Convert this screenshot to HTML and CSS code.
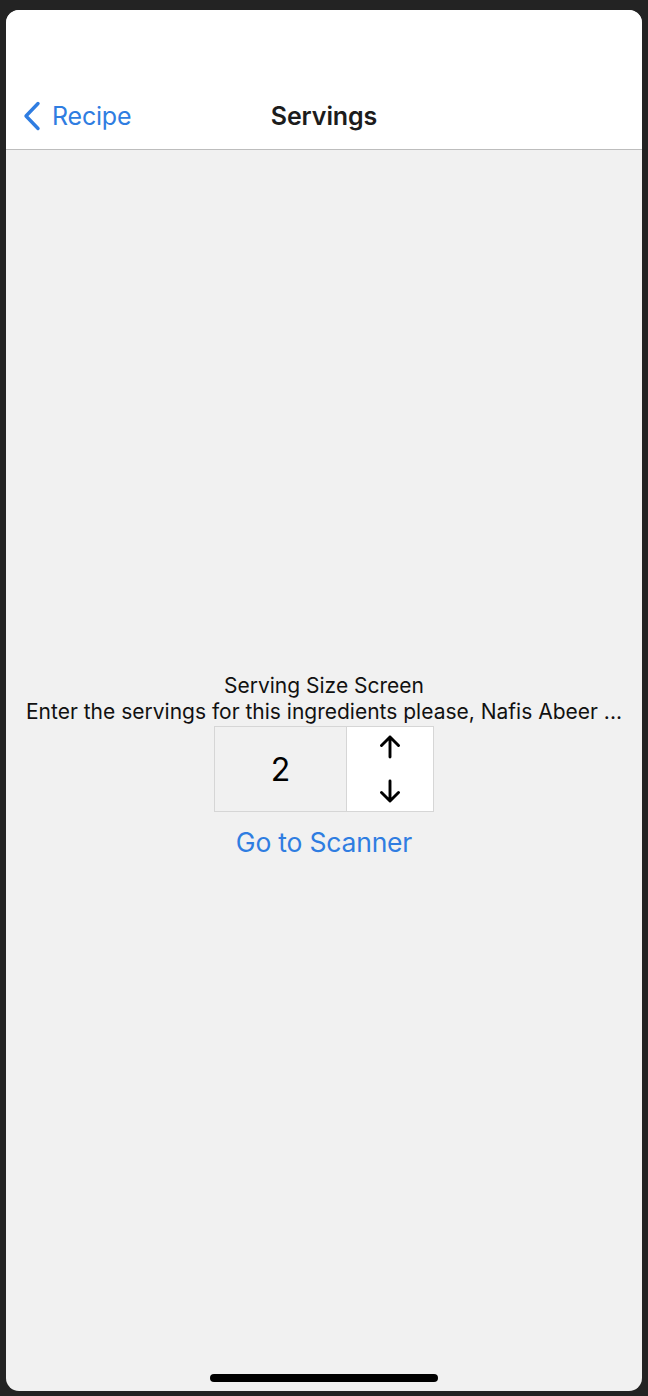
FILE: index.html
```html
<!DOCTYPE html>
<html lang="en">
<head>
<meta charset="utf-8">
<title>Servings</title>
<link rel="stylesheet" href="styles.css">
</head>
<body>
<div class="screen">
  <header class="navbar">
    <div class="nav-row">
      <a class="back" href="#">
        <svg class="chevron" width="20" height="30" viewBox="0 0 20 30" aria-hidden="true">
          <path d="M16 2.5 L4 15 L16 27.5" fill="none" stroke="#2f7de1" stroke-width="3.4" stroke-linecap="round" stroke-linejoin="round"/>
        </svg>
        <span class="back-label">Recipe</span>
      </a>
      <h1 class="title">Servings</h1>
    </div>
  </header>
  <main class="content">
    <p class="heading">Serving Size Screen</p>
    <p class="prompt">Enter the servings for this ingredients please, Nafis Abeer ...</p>
    <div class="stepper">
      <div class="value">2</div>
      <div class="arrows">
        <svg class="arrow" width="22" height="24" viewBox="0 0 22 24" aria-hidden="true">
          <path d="M11 22 V2 M2.5 10.5 L11 2 L19.5 10.5" fill="none" stroke="#000" stroke-width="2.9" stroke-linecap="round" stroke-linejoin="round"/>
        </svg>
        <svg class="arrow" width="22" height="24" viewBox="0 0 22 24" aria-hidden="true">
          <path d="M11 2 V22 M2.5 13.5 L11 22 L19.5 13.5" fill="none" stroke="#000" stroke-width="2.9" stroke-linecap="round" stroke-linejoin="round"/>
        </svg>
      </div>
    </div>
    <a class="scanner" href="#">Go to Scanner</a>
  </main>
  <div class="home-indicator"></div>
</div>
</body>
</html>
```

FILE: styles.css
```css
html, body {
  margin: 0;
  padding: 0;
}

body {
  background: #232323;
  font-family: "Inter", "Liberation Sans", Arial, sans-serif;
  color: #000;
  padding: 10px 6px 5px 6px;
  box-sizing: border-box;
  height: 1396px;
}

.screen {
  position: relative;
  height: 1381px;
  background: #f1f1f1;
  border-radius: 13px;
  overflow: hidden;
  display: flex;
  flex-direction: column;
}

.navbar {
  background: #fff;
  height: 140px;
  border-bottom: 1px solid #bdbdbd;
  box-sizing: border-box;
  display: flex;
  flex-direction: column;
  justify-content: flex-end;
}

.nav-row {
  position: relative;
  height: 60px;
  margin-bottom: 3px;
  display: flex;
  align-items: center;
  justify-content: center;
}

.back {
  position: absolute;
  left: 16px;
  top: 0;
  bottom: 0;
  display: flex;
  align-items: center;
  gap: 10px;
  text-decoration: none;
  color: #2f7de1;
}

.chevron {
  display: block;
}

.back-label {
  font-size: 25px;
  letter-spacing: -0.2px;
}

.title {
  margin: 0;
  font-size: 25px;
  font-weight: 600;
  color: #1c1c1c;
  letter-spacing: -0.1px;
}

.content {
  flex: 1;
  display: flex;
  flex-direction: column;
  align-items: center;
  justify-content: center;
  padding-bottom: 10px;
}

.heading, .prompt {
  margin: 0;
  font-size: 21px;
  line-height: 26px;
  color: #111;
  white-space: nowrap;
}

.stepper {
  margin-top: 1px;
  display: flex;
  height: 86px;
}

.value {
  width: 132px;
  box-sizing: border-box;
  border: 1px solid #d6d6d6;
  border-right: none;
  background: #f1f1f1;
  display: flex;
  align-items: center;
  justify-content: center;
  font-size: 32px;
}

.arrows {
  width: 88px;
  box-sizing: border-box;
  border: 1px solid #d6d6d6;
  background: #fff;
  display: flex;
  flex-direction: column;
  align-items: center;
  justify-content: center;
  gap: 20px;
}

.arrow {
  display: block;
}

.scanner {
  margin-top: 14px;
  font-size: 26.5px;
  color: #2f7de1;
  text-decoration: none;
  letter-spacing: -0.2px;
}

.home-indicator {
  position: absolute;
  left: 204px;
  bottom: 9px;
  width: 228px;
  height: 8px;
  border-radius: 4px;
  background: #000;
}
```
